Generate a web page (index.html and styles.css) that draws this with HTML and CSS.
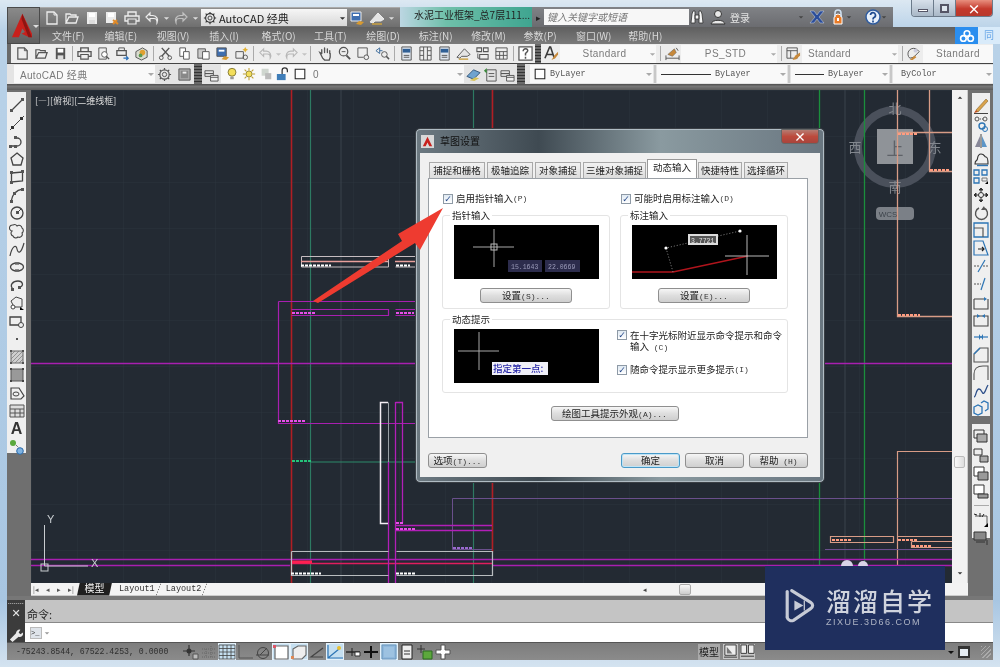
FILE: index.html
```html
<!DOCTYPE html>
<html lang="zh">
<head>
<meta charset="utf-8">
<title>AutoCAD 草图设置</title>
<link rel="stylesheet" href="styles.css">
</head>
<body>
<svg class="defs" width="0" height="0" aria-hidden="true">
<defs>
<symbol id="new" viewBox="0 0 16 16"><path d="M3 2h7l3 3v9H3z" fill="none" stroke="currentColor" stroke-width="1.3"/><path d="M10 2v3h3" fill="none" stroke="currentColor"/></symbol>
<symbol id="open" viewBox="0 0 16 16"><path d="M2 13V4h4l1 1h5v2H5l-3 6h10l2-6H12" fill="none" stroke="currentColor" stroke-width="1.3"/></symbol>
<symbol id="save" viewBox="0 0 16 16"><path d="M3 2h10v12H3z" fill="currentColor"/><path d="M5 3h6v4H5z" fill="#fff"/><path d="M5 10h6v4H5z" fill="#ddd"/></symbol>
<symbol id="saveas" viewBox="0 0 16 16"><path d="M2 2h10v11H2z" fill="currentColor"/><path d="M4 3h6v4H4z" fill="#fff"/><path d="M9 10l5 4M9 14l4-4" stroke="#e08a28" stroke-width="2"/></symbol>
<symbol id="plot" viewBox="0 0 16 16"><path d="M4 6V2h8v4M4 11H1V6h14v5h-3" fill="none" stroke="currentColor" stroke-width="1.4"/><path d="M4 9h8v5H4z" fill="none" stroke="currentColor" stroke-width="1.2"/></symbol>
<symbol id="preview" viewBox="0 0 16 16"><path d="M3 2h8v12H3z" fill="none" stroke="currentColor"/><circle cx="9" cy="9" r="3" fill="#fff" stroke="currentColor"/><path d="M11 11l3 3" stroke="currentColor" stroke-width="1.5"/></symbol>
<symbol id="publish" viewBox="0 0 16 16"><path d="M2 10V5h10v5z" fill="none" stroke="currentColor" stroke-width="1.4"/><path d="M4 5V2h6v3" fill="none" stroke="currentColor"/><path d="M9 13h5M12 11l2 2-2 2" stroke="#2c70b8" fill="none" stroke-width="1.4"/></symbol>
<symbol id="sheet" viewBox="0 0 16 16"><path d="M2 6l7-4 5 3v7l-6 3-6-3z" fill="#d8dcd0" stroke="currentColor"/><circle cx="9" cy="7" r="3" fill="#e0a030"/><circle cx="7" cy="10" r="2" fill="#5a9a50"/></symbol>
<symbol id="cut" viewBox="0 0 16 16"><path d="M4 2l8 9M12 2l-8 9" stroke="currentColor" stroke-width="1.5"/><circle cx="3.5" cy="12.5" r="2" fill="none" stroke="currentColor"/><circle cx="12.5" cy="12.5" r="2" fill="none" stroke="currentColor"/></symbol>
<symbol id="copy" viewBox="0 0 16 16"><path d="M3 2h6v9H3z" fill="#fff" stroke="currentColor"/><path d="M7 6h6v8H7z" fill="#fff" stroke="currentColor"/></symbol>
<symbol id="paste" viewBox="0 0 16 16"><path d="M2 3h8v10H2z" fill="#ccc" stroke="currentColor"/><path d="M7 6h7v8H7z" fill="#fff" stroke="currentColor"/></symbol>
<symbol id="match" viewBox="0 0 16 16"><path d="M2 2h10v9H2z" fill="#3f6fb0" stroke="currentColor"/><path d="M4 4h6v2H4z" fill="#fff"/><path d="M7 14l3-3 5 1-3 3z" fill="#d89a30"/></symbol>
<symbol id="block" viewBox="0 0 16 16"><path d="M2 6h8v7H2z" fill="none" stroke="currentColor"/><path d="M12 1l1 2 2 1-2 1-1 2-1-2-2-1 2-1z" fill="#e2b030"/><circle cx="12" cy="12" r="2.4" fill="none" stroke="currentColor"/></symbol>
<symbol id="undo" viewBox="0 0 16 16"><path d="M6 3L2 7l4 4V8.500h4a3 3 0 0 1 3 3V13a5 5 0 0 0-4-7.500H6z" fill="none" stroke="currentColor" stroke-width="1.2"/></symbol>
<symbol id="redo" viewBox="0 0 16 16"><path d="M10 3l4 4-4 4V8.500H6a3 3 0 0 0-3 3V13a5 5 0 0 1 4-7.500h3z" fill="none" stroke="currentColor" stroke-width="1.2"/></symbol>
<symbol id="drop" viewBox="0 0 8 16"><path d="M1 7h6l-3 3z" fill="currentColor"/></symbol>
<symbol id="pan" viewBox="0 0 16 16"><path d="M4 8V4M7 7V2M10 7V3M12.500 8V5M4 8L2 7l3 6 2 2h5l1-3V8" fill="none" stroke="currentColor" stroke-width="1.4" stroke-linecap="round"/></symbol>
<symbol id="zoom" viewBox="0 0 16 16"><circle cx="7" cy="6" r="4.500" fill="none" stroke="currentColor" stroke-width="1.3"/><path d="M10 10l4 4" stroke="currentColor" stroke-width="2"/><path d="M5 6h4" stroke="currentColor"/></symbol>
<symbol id="zoomw" viewBox="0 0 16 16"><path d="M2 2h10v8" fill="none" stroke="currentColor"/><path d="M2 2v10h6" fill="none" stroke="currentColor"/><circle cx="11" cy="12" r="2.500" fill="none" stroke="currentColor"/></symbol>
<symbol id="zoomp" viewBox="0 0 16 16"><path d="M1 5l4-3v6zM5 5h3" fill="none" stroke="#3b6a9a"/><circle cx="10" cy="9" r="3" fill="none" stroke="currentColor"/><path d="M12 11l3 3" stroke="currentColor" stroke-width="1.600"/></symbol>
<symbol id="prop" viewBox="0 0 16 16"><path d="M3 1h10v14H3z" fill="#dfe6ee" stroke="currentColor"/><path d="M4 3h8v4H4z" fill="#2f5f95"/><path d="M5 10h6M5 12h6" stroke="currentColor"/></symbol>
<symbol id="palette" viewBox="0 0 16 16"><path d="M2 1h12v14H2zM6 1v14M10 1v14" fill="none" stroke="currentColor"/><path d="M2 5h4M10 5h4M2 10h4M10 10h4" stroke="currentColor"/></symbol>
<symbol id="tool" viewBox="0 0 16 16"><path d="M1 12l8-9 6 6-3 2H6l-2 2z" fill="#e4e4e4" stroke="currentColor"/><path d="M3 14h10" stroke="#caa040" stroke-width="1.500"/></symbol>
<symbol id="sheetset" viewBox="0 0 16 16"><path d="M2 2h5v4H2zM9 2h5v4H9zM5 9h9v5H5z" fill="none" stroke="currentColor" stroke-width="1.100"/><path d="M3 8v5h2" fill="none" stroke="currentColor"/></symbol>
<symbol id="help" viewBox="0 0 16 16"><path d="M1 1h14v14H1z" fill="#fff" stroke="currentColor" stroke-width="1.300"/><path d="M5.500 5.500A2.500 2.500 0 0 1 8 3c2 0 3 1.500 2 3L8 8v2M8 11.500v2" fill="none" stroke="currentColor" stroke-width="1.600"/></symbol>
<symbol id="tstyle" viewBox="0 0 16 16"><path d="M1 13L6 1h1l4 12M3 9h6" fill="none" stroke="#3a3a3a" stroke-width="1.700"/><path d="M8 15l3-5 4-4v3l-3 4z" fill="#c7893b"/></symbol>
<symbol id="dstyle" viewBox="0 0 16 16"><path d="M1 13h14M1 10v5M15 10v5" fill="none" stroke="currentColor"/><path d="M3 9l7-6 2 4-4 4z" fill="#c7893b" stroke="currentColor" stroke-width=".5"/><path d="M12 2l2 3" stroke="currentColor"/></symbol>
<symbol id="tbl" viewBox="0 0 16 16"><path d="M2 2h12v12H2zM2 6h12M2 10h12M6 6v8M10 6v8" fill="none" stroke="currentColor"/></symbol>
<symbol id="tblstyle" viewBox="0 0 16 16"><path d="M1 2h11v11H1zM1 5h11M5 5v8" fill="#eee" stroke="currentColor"/><path d="M7 15l3-5 5-3v3l-4 4z" fill="#c7893b"/></symbol>
<symbol id="mlstyle" viewBox="0 0 16 16"><path d="M3 13a6 6 0 0 1 8-9l2 2-6 6z" fill="none" stroke="currentColor"/><circle cx="9" cy="5" r="2" fill="#ccd"/><path d="M3 15l5-5 2 2-4 3z" fill="#c7893b"/></symbol>
<symbol id="gear" viewBox="0 0 16 16"><circle cx="8" cy="8" r="5" fill="none" stroke="currentColor" stroke-width="1.300"/><circle cx="8" cy="8" r="2.300" fill="none" stroke="currentColor"/><path d="M8 1v2M8 13v2M1 8h2M13 8h2M3 3l1.500 1.500M11.500 11.500L13 13M13 3l-1.500 1.500M4.500 11.500L3 13" stroke="currentColor" stroke-width="1.300"/></symbol>
<symbol id="layers" viewBox="0 0 16 16"><path d="M1 4h9v3H1zM1 7h9v3H1z" fill="none" stroke="currentColor"/><path d="M7 9h8v6H7z" fill="#eee" stroke="currentColor"/><path d="M7 11h8" stroke="currentColor"/></symbol>
<symbol id="wsave" viewBox="0 0 16 16"><path d="M2 2h12v12H2z" fill="#aaa" stroke="currentColor"/><path d="M4 4h8v8H4z" fill="#888"/><path d="M6 5h4v2H6z" fill="#eee"/></symbol>
<symbol id="bulb" viewBox="0 0 16 16"><circle cx="8" cy="6" r="4.500" fill="#f3de5b" stroke="#7d7230"/><path d="M6 11h4v3H6z" fill="#9a9a9a"/></symbol>
<symbol id="sun" viewBox="0 0 16 16"><circle cx="8" cy="8" r="3.500" fill="#f3de5b" stroke="#8f8030"/><path d="M8 1v3M8 12v3M1 8h3M12 8h3M3 3l2 2M11 11l2 2M13 3l-2 2M5 11l-2 2" stroke="#c0a030" stroke-width="1.200"/></symbol>
<symbol id="lay" viewBox="0 0 16 16"><path d="M3 2h8v8H3z" fill="#cfd6cf"/><path d="M7 7h7v7H7z" fill="#bbb"/></symbol>
<symbol id="lock" viewBox="0 0 16 16"><path d="M1 8h10v7H1z" fill="#3f7db8"/><path d="M7 8V4a3 3 0 0 1 6 0v2" fill="none" stroke="#333" stroke-width="1.400"/></symbol>
<symbol id="sq" viewBox="0 0 16 16"><path d="M2.500 2.500h11v11h-11z" fill="#fff" stroke="#222" stroke-width="1.200"/></symbol>
<symbol id="layst" viewBox="0 0 16 16"><path d="M1 10l7-7 7 3-7 7z" fill="#6fa3cf" stroke="#35577a"/><path d="M4 14l6-3 4 1-5 3z" fill="#d8c35a"/></symbol>
<symbol id="layprev" viewBox="0 0 16 16"><path d="M4 3h10v12H4z" fill="none" stroke="currentColor"/><path d="M1 4l3-3v6z" fill="#3a8a3a"/><path d="M6 7h6M6 10h6" stroke="currentColor"/></symbol>
<symbol id="binoc" viewBox="0 0 16 16"><path d="M2 14l1-9 1-3h2v12zM14 14l-1-9-1-3h-2v12zM6 6h4v4H6z" fill="#f5f5f5" stroke="#333" stroke-width=".8"/></symbol>
<symbol id="user" viewBox="0 0 16 16"><circle cx="8" cy="5" r="3.500" fill="#e8e8e8" stroke="#333"/><path d="M1 15c1-5 13-5 14 0z" fill="#e8e8e8" stroke="#333"/></symbol>
<symbol id="xapp" viewBox="0 0 16 16"><path d="M1 2h4l3 4 3-4h4l-5 6 5 6h-4l-3-4-3 4H1l5-6z" fill="#2b4d9a" stroke="#c8d4ea" stroke-width=".5"/></symbol>
<symbol id="key" viewBox="0 0 16 16"><path d="M4 9a4 4 0 0 1 8 0v6H4z" fill="#e87b28" stroke="#fff"/><path d="M5 8V4a3 3 0 0 1 6 0v4" fill="none" stroke="#cfe0f0" stroke-width="1.600"/><path d="M8 9v3" stroke="#fff" stroke-width="2"/></symbol>
<symbol id="qhelp" viewBox="0 0 16 16"><circle cx="8" cy="8" r="7" fill="#e8f0fa" stroke="#2f5c9f" stroke-width="1.500"/><path d="M5.500 6A2.500 2.500 0 1 1 9 8.500c-.8.500-1 1-1 2" fill="none" stroke="#1e4a90" stroke-width="1.700"/><path d="M8 11.500v2" stroke="#1e4a90" stroke-width="1.700"/></symbol>
<symbol id="cloud" viewBox="0 0 20 16"><circle cx="10" cy="5" r="3.500" fill="none" stroke="#fff" stroke-width="2"/><circle cx="5.500" cy="11" r="3.500" fill="none" stroke="#fff" stroke-width="2"/><circle cx="14.500" cy="11" r="3.500" fill="none" stroke="#fff" stroke-width="2"/></symbol>

<symbol id="d-line" viewBox="0 0 16 16"><path d="M2.500 13.500l11-11" stroke="currentColor" stroke-width="1.200"/><path d="M1 12h3v3H1zM12 1h3v3h-3z" fill="#555"/></symbol>
<symbol id="d-xline" viewBox="0 0 16 16"><path d="M1 15L15 1" stroke="currentColor"/><path d="M2 11h3v3H2zM11 2h3v3h-3z" fill="#333"/></symbol>
<symbol id="d-pline" viewBox="0 0 16 16"><path d="M1 13h7a4 4 0 0 0 0-8H6" fill="none" stroke="currentColor" stroke-width="1.300"/><path d="M0 12h3v3H0zM5 12h3v3H5zM5 3h3v3H5z" fill="#555"/></symbol>
<symbol id="d-poly" viewBox="0 0 16 16"><path d="M8 2l6 5-2 7H4L2 7z" fill="none" stroke="currentColor" stroke-width="1.300"/></symbol>
<symbol id="d-rect" viewBox="0 0 16 16"><path d="M2.500 4l11-1v9l-11 1z" fill="none" stroke="currentColor" stroke-width="1.300"/><path d="M1 2h3v3H1zM12 1h3v3h-3zM1 12h3v3H1z" fill="#555"/></symbol>
<symbol id="d-arc" viewBox="0 0 16 16"><path d="M2 15C3 7 7 3 14 2" fill="none" stroke="currentColor" stroke-width="1.300"/><path d="M1 13h3v3H1zM12 1h3v3h-3zM4 5h3v3H4z" fill="#555"/></symbol>
<symbol id="d-circ" viewBox="0 0 16 16"><circle cx="8" cy="8" r="6" fill="none" stroke="currentColor" stroke-width="1.300"/><path d="M7 6h3v3H7z" fill="#555"/><path d="M8 8l4-4" stroke="currentColor"/></symbol>
<symbol id="d-rev" viewBox="0 0 16 16"><path d="M4 2a3 3 0 0 1 4 1 3 3 0 0 1 5 2 3 3 0 0 1 0 5 3 3 0 0 1-4 4 3 3 0 0 1-5-1 3 3 0 0 1-1-5 3 3 0 0 1 1-6z" fill="none" stroke="currentColor" stroke-width="1.100"/></symbol>
<symbol id="d-spl" viewBox="0 0 16 16"><path d="M1 15C3 5 7 3 8 8s4 5 7-6" fill="none" stroke="currentColor" stroke-width="1.200"/></symbol>
<symbol id="d-ell" viewBox="0 0 16 16"><ellipse cx="8" cy="8" rx="6.500" ry="4" fill="none" stroke="currentColor" stroke-width="1.300"/><path d="M6 3h4v3H6zM6 10h4v3H6z" fill="#666" opacity=".7"/></symbol>
<symbol id="d-ellarc" viewBox="0 0 16 16"><path d="M4 12C0 8 4 4 9 4s6 5 2 6" fill="none" stroke="currentColor" stroke-width="1.300"/><path d="M2 11h3v3H2zM9 9h3v3H9z" fill="#555"/></symbol>
<symbol id="d-ins" viewBox="0 0 16 16"><path d="M2 6l5-4 6 2v8H5z" fill="none" stroke="currentColor"/><circle cx="4" cy="12" r="2" fill="#fff" stroke="currentColor"/><path d="M11 12l4 3-4 0z" fill="#000"/></symbol>
<symbol id="d-blk" viewBox="0 0 16 16"><path d="M1 4h11v8H1z" fill="none" stroke="currentColor" stroke-width="1.300"/><circle cx="12" cy="12" r="2.500" fill="#eee" stroke="currentColor"/></symbol>
<symbol id="d-pt" viewBox="0 0 16 16"><path d="M7 7h2v2H7z" fill="#555"/></symbol>
<symbol id="d-hat" viewBox="0 0 16 16"><path d="M2 2h12v12H2z" fill="#cfcfcf" stroke="#666"/><path d="M2 6l4-4M2 10l8-8M2 14L14 2M6 14l8-8M10 14l4-4" stroke="#777" stroke-width=".7"/><path d="M1 1h2v2H1zM13 1h2v2h-2zM1 13h2v2H1zM13 13h2v2h-2z" fill="#555"/></symbol>
<symbol id="d-grd" viewBox="0 0 16 16"><path d="M2 2h12v12H2z" fill="#999" stroke="#555"/><path d="M1 1h2v2H1zM13 1h2v2h-2zM1 13h2v2H1zM13 13h2v2h-2z" fill="#444"/></symbol>
<symbol id="d-reg" viewBox="0 0 16 16"><path d="M2 3h8l5 8-3 3H2z" fill="none" stroke="currentColor" stroke-width="1.200"/><ellipse cx="7" cy="9" rx="3" ry="2" fill="none" stroke="currentColor"/></symbol>
<symbol id="d-tbl" viewBox="0 0 16 16"><path d="M1 2h14v12H1z" fill="#ddd" stroke="#555"/><path d="M1 6h14M1 10h14M6 6v8M11 6v8" stroke="#555"/></symbol>
<symbol id="d-add" viewBox="0 0 16 16"><circle cx="4" cy="4" r="3" fill="#5aa83c"/><path d="M7 6l3 3" stroke="#444" stroke-dasharray="1 1"/><circle cx="11" cy="12" r="3.300" fill="#7fb2e0" stroke="#2a6aaa"/></symbol>

<symbol id="m-erase" viewBox="0 0 16 16"><path d="M3 12L13 1l2 2L5 14z" fill="#d9a24a" stroke="#8a6a30" stroke-width=".6"/><path d="M1 15l2-3 2 2z" fill="#c05020"/><path d="M1 15.500h14" stroke="#444"/></symbol>
<symbol id="m-copy" viewBox="0 0 16 16"><circle cx="4" cy="3" r="2" fill="none" stroke="#555"/><path d="M7 3h4" stroke="#555" stroke-dasharray="1 1"/><circle cx="12" cy="3" r="2" fill="none" stroke="#555"/><circle cx="9" cy="10" r="3" fill="none" stroke="#2d75b5" stroke-width="1.400"/><circle cx="12" cy="13" r="2.500" fill="none" stroke="#2d75b5"/></symbol>
<symbol id="m-mirror" viewBox="0 0 16 16"><path d="M8 1v14" stroke="#444"/><path d="M7 3v11H2z" fill="#889"/><path d="M9 3v11h5z" fill="#5d96c8"/></symbol>
<symbol id="m-offset" viewBox="0 0 16 16"><path d="M2 13c0-3 1-3 2-4s0-6 4-6 3 3 5 3 2 3 2 7z" fill="none" stroke="#333" stroke-width="1.100"/><path d="M4 14.500h11" stroke="#2d75b5" stroke-width="1.400"/></symbol>
<symbol id="m-array" viewBox="0 0 16 16"><path d="M1 1h5v5H1zM9 1h5v5H9zM1 9h5v5H1z" fill="none" stroke="#2d75b5" stroke-width="1.300"/><path d="M9 9h5v3H9z" fill="none" stroke="#777"/><path d="M12 15l3-3v3z" fill="#000"/></symbol>
<symbol id="m-move" viewBox="0 0 16 16"><path d="M8 1v14M1 8h14M8 1L6 3h4zM8 15l-2-2h4zM1 8l2-2v4zM15 8l-2-2v4z" fill="#333" stroke="#333"/><circle cx="8" cy="8" r="2.500" fill="#eee" stroke="#333"/></symbol>
<symbol id="m-rotate" viewBox="0 0 16 16"><path d="M6 3a6 6 0 1 0 5 0" fill="none" stroke="#555" stroke-width="1.400"/><path d="M11 1l1 4-4 0z" fill="#555"/></symbol>
<symbol id="m-scale" viewBox="0 0 16 16"><path d="M1 1h14v14H1z" fill="none" stroke="#2d75b5" stroke-width="1.300"/><path d="M1 6h9v9" fill="none" stroke="#555" stroke-width="1.200"/></symbol>
<symbol id="m-stretch" viewBox="0 0 16 16"><path d="M1 1h9l5 14H1z" fill="none" stroke="#2d75b5" stroke-width="1.200"/><path d="M5 9h6M9 7l2 2-2 2" fill="none" stroke="#222" stroke-width="1.200"/></symbol>
<symbol id="m-trim" viewBox="0 0 16 16"><path d="M12 2L5 14" stroke="#2d75b5" stroke-width="1.200"/><path d="M1 8h5M10 8h5" stroke="#555" stroke-dasharray="2 1"/></symbol>
<symbol id="m-ext" viewBox="0 0 16 16"><path d="M12 2L8 14" stroke="#2d75b5" stroke-width="1.200"/><path d="M1 8h7" stroke="#555" stroke-dasharray="2 1"/></symbol>
<symbol id="m-brk" viewBox="0 0 16 16"><path d="M1 5h10M1 5v10h14V5" fill="none" stroke="#444" stroke-width="1.100"/><path d="M11 3l3 2-3 2z" fill="#2d75b5"/></symbol>
<symbol id="m-brk2" viewBox="0 0 16 16"><path d="M1 5h14v10H1z" fill="none" stroke="#444" stroke-width="1.100"/><path d="M4 3l3 2-3 2zM12 3L9 5l3 2z" fill="#2d75b5"/></symbol>
<symbol id="m-join" viewBox="0 0 16 16"><path d="M1 8h14" stroke="#2d75b5" stroke-width="1.200"/><path d="M6 5l2 3-2 3zM10 5L8 8l2 3z" fill="#2d75b5"/></symbol>
<symbol id="m-cham" viewBox="0 0 16 16"><path d="M1 15V7l6-6h8v14z" fill="none" stroke="#555" stroke-width="1.100"/><path d="M1 7l6-6" stroke="#2d75b5" stroke-width="1.300"/></symbol>
<symbol id="m-fil" viewBox="0 0 16 16"><path d="M1 15V9C1 4 4 1 10 1h5v14" fill="none" stroke="#555" stroke-width="1.100"/></symbol>
<symbol id="m-bln" viewBox="0 0 16 16"><path d="M1 14c2 0 2-8 5-8s3 6 5 4 2-5 4-8" fill="none" stroke="#2d4f8a" stroke-width="1.300"/></symbol>
<symbol id="m-exp" viewBox="0 0 16 16"><path d="M1 7l4-2 4 2v6l-4 2-4-2zM8 3l3-2 4 2v6l-3 2" fill="none" stroke="#2d75b5" stroke-width="1.300"/></symbol>
<symbol id="o-1" viewBox="0 0 16 16"><path d="M1 1h10v8H1z" fill="#eee" stroke="#333"/><path d="M4 5h10v8H4z" fill="#aaa" stroke="#333"/></symbol>
<symbol id="o-2" viewBox="0 0 16 16"><path d="M1 1h8v6H1z" fill="#eee" stroke="#333"/><path d="M7 8h8v6H7z" fill="#aaa" stroke="#333"/></symbol>
<symbol id="o-3" viewBox="0 0 16 16"><path d="M1 1h10v9H1z" fill="#fff" stroke="#333"/><path d="M5 6h10v8H5z" fill="#999" stroke="#333"/></symbol>
<symbol id="o-4" viewBox="0 0 16 16"><path d="M1 1h10v9H1z" fill="#fff" stroke="#333"/><path d="M5 10h10v4H5z" fill="#999" stroke="#333"/></symbol>
<symbol id="o-5" viewBox="0 0 16 16"><path d="M2 4h12v10" fill="none" stroke="#555"/><path d="M1 2l3 1M7 1v4M11 2l-2 3" stroke="#222"/><path d="M11 15l4-4v4z" fill="#000"/></symbol>
<symbol id="o-6" viewBox="0 0 16 16"><path d="M1 2h12v8H1z" fill="#888" stroke="#333"/><path d="M3 12h9M14 10v5" stroke="#333"/></symbol>

<symbol id="s-infer" viewBox="0 0 18 16"><path d="M7 1v11M1 7h12" stroke="#333" stroke-width="1.200"/><circle cx="7" cy="7" r="2.500" fill="#333"/><path d="M11 10h5v5h-5z" fill="#bbb" stroke="#555"/></symbol>
<symbol id="s-snap" viewBox="0 0 18 16"><path d="M2 13h14M11 2v11M6 5v8M2 9h14M2 5h14" stroke="#666" stroke-dasharray="1 1"/></symbol>
<symbol id="s-grid" viewBox="0 0 18 16"><path d="M1 1h16v14H1zM1 4.500h16M1 8h16M1 11.500h16M5 1v14M9 1v14M13 1v14" fill="none" stroke="#444" stroke-width=".8"/></symbol>
<symbol id="s-ortho" viewBox="0 0 18 16"><path d="M3 1v13h14" fill="none" stroke="#555"/></symbol>
<symbol id="s-polar" viewBox="0 0 18 16"><circle cx="9" cy="9" r="5.500" fill="none" stroke="#444"/><path d="M2 11h13M6 11l7-7" stroke="#444"/></symbol>
<symbol id="s-box" viewBox="0 0 18 16"><path d="M3 2h13v13H3z" fill="#fff" stroke="#666" stroke-width="1.200"/><path d="M1 1h3v3H1z" fill="#d56"/></symbol>
<symbol id="s-box3" viewBox="0 0 18 16"><path d="M3 5l5-3h8v9l-4 4H3z" fill="#eee" stroke="#666" stroke-width="1.100"/><path d="M1 12h3v3H1z" fill="#d85"/></symbol>
<symbol id="s-angle" viewBox="0 0 18 16"><path d="M15 4L3 13h12" fill="none" stroke="#444" stroke-width="1.200"/></symbol>
<symbol id="s-ucs" viewBox="0 0 18 16"><path d="M2 1v13h15M2 14l11-9" fill="none" stroke="#2d75b5" stroke-width="1.200"/><circle cx="13" cy="4" r="2" fill="#e8c030"/></symbol>
<symbol id="s-dyn" viewBox="0 0 18 16"><path d="M2 8h14" stroke="#222" stroke-width="1.400"/><path d="M8 4v8" stroke="#222"/><path d="M11 8h5v4h-5z" fill="#fff" stroke="#333"/></symbol>
<symbol id="s-cross" viewBox="0 0 18 16"><path d="M9 2v12M2 8h14" stroke="#111" stroke-width="2"/></symbol>
<symbol id="s-trans" viewBox="0 0 18 16"><path d="M2 1h14v14H2z" fill="#8fb8dc" stroke="#6a95bb"/><path d="M4 3h10v10H4z" fill="#a7c8e4" opacity=".6"/></symbol>
<symbol id="s-qp" viewBox="0 0 18 16"><path d="M4 1h10v14H4z" fill="#eee" stroke="#222"/><path d="M6 7h6M6 10h6" stroke="#333"/></symbol>
<symbol id="s-sc" viewBox="0 0 18 16"><path d="M5 1v8M1 5h8" stroke="#333"/><path d="M7 7h9v8H7z" fill="#5ca83c" stroke="#2a6a20"/></symbol>
<symbol id="s-am" viewBox="0 0 18 16"><path d="M7 1h4v5h5v4h-5v5H7v-5H2V6h5z" fill="#fff" stroke="#555"/></symbol>
<symbol id="s-model" viewBox="0 0 16 16"><path d="M2 1h12v11H2z" fill="#eee" stroke="#333"/><path d="M4 3v7h6z" fill="#777"/><path d="M1 14h14" stroke="#333"/></symbol>
<symbol id="s-layout" viewBox="0 0 16 16"><path d="M1 1h6v9H1zM9 1h6v9H9z" fill="#eee" stroke="#333"/><path d="M1 13h14" stroke="#333"/></symbol>
</defs>
</svg>

<div class="window">
  <header class="head">
    <div class="app-btn">
      <svg class="app-logo" viewBox="0 0 24 30"><path d="M13 1L1 28h8l4-10 3 4-4 2 9 4h5z" fill="#c8201c"/><path d="M13 1l11 27h-4L12 7z" fill="#8e1412"/></svg>
      <svg class="ic ic-drop"><use href="#drop"/></svg>
    </div>
    <div class="row-title">
      <div class="qat">
        <svg class="ic"><use href="#new"/></svg><svg class="ic"><use href="#open"/></svg><svg class="ic"><use href="#save"/></svg><svg class="ic"><use href="#saveas"/></svg><svg class="ic"><use href="#plot"/></svg><svg class="ic"><use href="#undo"/></svg><svg class="ic-d"><use href="#drop"/></svg><svg class="ic ic-dim"><use href="#redo"/></svg><svg class="ic-d"><use href="#drop"/></svg>
        <div class="ws-combo"><svg class="ic"><use href="#gear"/></svg><span class="ws-text">AutoCAD 经典</span><svg class="ic-d"><use href="#drop"/></svg></div>
        <svg class="ic"><use href="#match"/></svg><svg class="ic"><use href="#tool"/></svg><svg class="ic-d"><use href="#drop"/></svg>
      </div>
      <div class="doc-title">水泥工业框架_总7层111...</div>
      <div class="search">
        <span class="search-tab">▸</span>
        <div class="search-box">键入关键字或短语</div>
        <svg class="ic"><use href="#binoc"/></svg>
        <svg class="ic ic-user"><use href="#user"/></svg>
        <span class="login">登录</span>
        <svg class="ic-d ic-login"><use href="#drop"/></svg>
        <svg class="ic ic-x"><use href="#xapp"/></svg>
        <svg class="ic ic-x"><use href="#key"/></svg>
        <svg class="ic-d"><use href="#drop"/></svg>
        <svg class="ic ic-help"><use href="#qhelp"/></svg>
        <svg class="ic-d"><use href="#drop"/></svg>
      </div>
      <div class="win-ctl">
        <span class="wc wc-min"><i class="wc-min-bar"></i></span>
        <span class="wc wc-max"><i class="wc-max-box"></i></span>
        <span class="wc wc-close">×</span>
      </div>
    </div>
    <div class="row-menu">
      <nav class="menu">
        <span>文件(F)</span><span>编辑(E)</span><span>视图(V)</span><span>插入(I)</span><span>格式(O)</span><span>工具(T)</span><span>绘图(D)</span><span>标注(N)</span><span>修改(M)</span><span>参数(P)</span><span>窗口(W)</span><span>帮助(H)</span>
      </nav>
      <div class="baidu"><span class="baidu-ic"><svg class="cloud"><use href="#cloud"/></svg></span><span class="baidu-rest">同</span></div>
    </div>
  </header>

  <div class="tb tb1">
    <span class="grip"></span>
    <svg class="ic"><use href="#new"/></svg><svg class="ic"><use href="#open"/></svg><svg class="ic"><use href="#save"/></svg>
    <i class="sep"></i>
    <svg class="ic"><use href="#plot"/></svg><svg class="ic"><use href="#preview"/></svg><svg class="ic"><use href="#publish"/></svg><svg class="ic"><use href="#sheet"/></svg>
    <i class="sep"></i>
    <svg class="ic"><use href="#cut"/></svg><svg class="ic"><use href="#copy"/></svg><svg class="ic"><use href="#paste"/></svg><svg class="ic"><use href="#match"/></svg><svg class="ic"><use href="#block"/></svg>
    <i class="sep"></i>
    <svg class="ic ic-faint"><use href="#undo"/></svg><svg class="ic-d ic-faint"><use href="#drop"/></svg><svg class="ic ic-faint"><use href="#redo"/></svg><svg class="ic-d ic-faint"><use href="#drop"/></svg>
    <i class="sep sep-w"></i>
    <svg class="ic"><use href="#pan"/></svg><svg class="ic"><use href="#zoom"/></svg><svg class="ic"><use href="#zoomw"/></svg><svg class="ic"><use href="#zoomp"/></svg>
    <i class="sep"></i>
    <svg class="ic"><use href="#prop"/></svg><svg class="ic"><use href="#palette"/></svg><svg class="ic"><use href="#prop"/></svg><svg class="ic"><use href="#tool"/></svg><svg class="ic"><use href="#sheetset"/></svg><svg class="ic"><use href="#tbl"/></svg>
    <i class="sep"></i>
    <svg class="ic"><use href="#help"/></svg>
    <span class="grip grip-dark"></span>
    <svg class="ic"><use href="#tstyle"/></svg>
    <div class="combo c-std1"><span class="combo-mid">Standard</span><svg class="ic-d"><use href="#drop"/></svg></div>
    <i class="sep"></i>
    <svg class="ic"><use href="#dstyle"/></svg>
    <div class="combo c-std1"><span class="combo-mid">PS_STD</span><svg class="ic-d"><use href="#drop"/></svg></div>
    <i class="sep"></i>
    <svg class="ic"><use href="#tblstyle"/></svg>
    <div class="combo c-std1"><span class="combo-left">Standard</span><svg class="ic-d"><use href="#drop"/></svg></div>
    <i class="sep"></i>
    <svg class="ic"><use href="#mlstyle"/></svg>
    <div class="combo c-std2"><span class="combo-mid">Standard</span></div>
  </div>

  <div class="tb tb2">
    <div class="combo c-ws"><span class="combo-left">AutoCAD 经典</span><svg class="ic-d"><use href="#drop"/></svg></div>
    <svg class="ic"><use href="#gear"/></svg><svg class="ic ic-ml"><use href="#wsave"/></svg>
    <span class="grip grip-dark"></span>
    <svg class="ic"><use href="#layers"/></svg>
    <div class="combo c-layer">
      <svg class="ic-s"><use href="#bulb"/></svg><svg class="ic-s"><use href="#sun"/></svg><svg class="ic-s"><use href="#lay"/></svg><svg class="ic-s"><use href="#lock"/></svg><svg class="ic-s"><use href="#sq"/></svg>
      <span class="layer-name">0</span><svg class="ic-d"><use href="#drop"/></svg>
    </div>
    <svg class="ic"><use href="#layst"/></svg><svg class="ic"><use href="#layprev"/></svg><svg class="ic"><use href="#layers"/></svg>
    <span class="grip grip-dark"></span>
    <div class="combo c-color"><svg class="ic-s"><use href="#sq"/></svg><span class="mono">ByLayer</span><svg class="ic-d"><use href="#drop"/></svg></div>
    <i class="gap-sep"></i>
    <div class="combo c-ltype"><i class="ln ln-l"></i><span class="mono">ByLayer</span><svg class="ic-d"><use href="#drop"/></svg></div>
    <i class="gap-sep"></i>
    <div class="combo c-lw"><i class="ln ln-m"></i><span class="mono">ByLayer</span><svg class="ic-d"><use href="#drop"/></svg></div>
    <i class="gap-sep"></i>
    <div class="combo c-plot"><span class="mono mono-pl">ByColor</span><svg class="ic-d"><use href="#drop"/></svg></div>
  </div>
  <div class="tb-gap"></div>

  <main class="main">
    <aside class="side side-l">
      <div class="vbar vbar-l">
        <span class="vgrip"></span>
        <svg class="vi"><use href="#d-line"/></svg><svg class="vi"><use href="#d-xline"/></svg><svg class="vi"><use href="#d-pline"/></svg><svg class="vi"><use href="#d-poly"/></svg><svg class="vi"><use href="#d-rect"/></svg><svg class="vi"><use href="#d-arc"/></svg><svg class="vi"><use href="#d-circ"/></svg><svg class="vi"><use href="#d-rev"/></svg><svg class="vi"><use href="#d-spl"/></svg><svg class="vi"><use href="#d-ell"/></svg><svg class="vi"><use href="#d-ellarc"/></svg><svg class="vi"><use href="#d-ins"/></svg><svg class="vi"><use href="#d-blk"/></svg><svg class="vi"><use href="#d-pt"/></svg><svg class="vi"><use href="#d-hat"/></svg><svg class="vi"><use href="#d-grd"/></svg><svg class="vi"><use href="#d-reg"/></svg><svg class="vi"><use href="#d-tbl"/></svg><span class="vi vi-a">A</span><svg class="vi"><use href="#d-add"/></svg>
      </div>
    </aside>
    <div class="center">
      <div class="canvas-row">
        <svg class="canvas" viewBox="31 90 921 493">
          <defs>
            <pattern id="grid" x="31" y="90" width="46" height="46" patternUnits="userSpaceOnUse"><path d="M46 0H0V46" fill="none" stroke="#2c333d" stroke-width="1"/></pattern>
          </defs>
          <rect x="31" y="90" width="921" height="493" fill="#232a33"/>
          <rect x="31" y="90" width="921" height="493" fill="url(#grid)"/>
          <g class="cube">
            <circle cx="895" cy="147" r="37" fill="none" stroke="#4a505b" stroke-width="8"/>
            <rect x="877" y="129" width="36" height="35" fill="#8f9398"/>
            <text x="895" y="155" class="cube-main">上</text>
            <text x="895" y="113" class="cube-t">北</text>
            <text x="895" y="192" class="cube-t">南</text>
            <text x="855" y="152" class="cube-t">西</text>
            <text x="935" y="152" class="cube-t">东</text>
            <rect x="876" y="207" width="38" height="13" rx="4" fill="#7b8087"/>
            <text x="888" y="217" class="cube-w">WCS</text>
          </g>
          <g fill="none" stroke-width="1">
            <path d="M341 90V583M845 90V583" stroke="#3a424d"/>
            <path d="M310.500 90V583M473.500 90V130M473.500 480V583" stroke="#2d7a62" stroke-width="1.200"/>
            <path d="M819.500 90V128M819.500 482V566M864.500 90V566" stroke="#1b8f3c" stroke-width="1.300"/>
            <path d="M291.500 90V583M492.500 90V130M492.500 480V552" stroke="#b01e24" stroke-width="1.600"/>
            <path d="M897.500 90V316.500H952M929.500 90V171.500H952M897.500 132.500H952" stroke="#d89c86" stroke-width="1.300"/>
            <path d="M897.500 566V451.500H952M830.500 536.500h63v6h-63zM897.500 536.500H952M911.500 541.500V547.500H952M911.500 541.500H952" stroke="#d89c86" stroke-width="1.200"/>
            <path d="M825 498.500H952M825 549.500H952M452.500 549.500V498.500H825M452.500 549.500H492" stroke="#6a4f8c"/>
            <path d="M31 363.500H415M825 363.500H952M31 559.500H952M31 565.500H290M492 565.500H952" stroke="#a81fb0" stroke-width="1.500"/>
            <path d="M278.500 301.500H415M278.500 301.500V423.500H415M291.500 309.500H388.500V315.500H291.500M395.500 309.500H415M395.500 315.500H415" stroke="#a81fb0" stroke-width="1.200"/>
            <path d="M291 563.500H492" stroke="#e01d5f" stroke-width="1.500"/>
            <path d="M310 462H415" stroke="#2d8a6a"/>
            <path d="M388.500 462V583M395.500 402V583M395.500 402.500H402.500V523M396 525.500H492M396 530.500H492" stroke="#b21fb8" stroke-width="1.300"/>
            <path d="M388.500 402.500V462" stroke="#9aa0a6"/>
            <path d="M388 402.500H380.500V523.500H388" stroke="#f4eef4" stroke-width="1.500"/>
            <path d="M301.500 256.500H388.500V267H301.500V256.500M395.500 256.500H415M395.500 267H415" stroke="#c5bcc0"/>
            <path d="M301 261.500H388M395 261.500H415" stroke="#e8a09c" stroke-width="1.500"/>
            <path d="M301.500 551.500H388.500M291.500 551.500V575.500H388.500M396.500 551.500H492.500V575.500H396.500M291.500 551.500H388" stroke="#b8bcbf" stroke-width="1.200"/>
            <path d="M301 265.500h30M396 265.500h14M291 573.500h30M396 573.500h20" stroke="#fff" stroke-width="2" stroke-dasharray="3 1"/>
            <path d="M292 313h24M396 313h18M278 421h28" stroke="#e64fe8" stroke-width="2" stroke-dasharray="3 1"/>
            <path d="M292 461h20" stroke="#25c47a" stroke-width="2" stroke-dasharray="3 1"/>
            <path d="M396 529h20M396 523h7" stroke="#e64fe8" stroke-width="2" stroke-dasharray="3 1"/>
            <path d="M453 548h20" stroke="#9a6ad0" stroke-width="2" stroke-dasharray="3 1"/>
            <path d="M292 562h20" stroke="#ff2050" stroke-width="3"/>
            <path d="M898 134h20M930 170h20M898 315h22M832 540h20M898 540h20M912 546h20" stroke="#ff9c80" stroke-width="2" stroke-dasharray="3 1"/>
          </g>
          <circle cx="847" cy="566" r="6" fill="#d9d4e8"/><circle cx="863" cy="566" r="5" fill="#d9d4e8"/>
          <g class="ucs">
            <path d="M44.500 525V566H88" fill="none" stroke="#c8ccd0"/>
            <rect x="41" y="564" width="7" height="7" fill="none" stroke="#c8ccd0"/>
            <text x="47" y="523" class="ucs-t">Y</text>
            <text x="91" y="567" class="ucs-t">X</text>
          </g>
          <text x="35" y="104" class="view-label">[—][俯视][二维线框]</text>
        </svg>
        <div class="vscroll"><svg class="ic-d"><use href="#drop"/></svg><span class="vthumb"></span><svg class="ic-d"><use href="#drop"/></svg></div>
      </div>
      <div class="tabs-bar">
        <div class="nav-btns"><span>|◂</span><span>◂</span><span>▸</span><span>▸|</span></div>
        <span class="lt lt-on">模型</span><span class="lt">Layout1</span><span class="lt">Layout2</span>
        <span class="hscroll-arrow">◂</span><span class="hthumb"></span>
      </div>
    </div>
    <aside class="side side-r">
      <div class="vbar vbar-r">
        <span class="vgrip"></span>
        <svg class="vi"><use href="#m-erase"/></svg><svg class="vi"><use href="#m-copy"/></svg><svg class="vi"><use href="#m-mirror"/></svg><svg class="vi"><use href="#m-offset"/></svg><svg class="vi"><use href="#m-array"/></svg><svg class="vi"><use href="#m-move"/></svg><svg class="vi"><use href="#m-rotate"/></svg><svg class="vi"><use href="#m-scale"/></svg><svg class="vi"><use href="#m-stretch"/></svg><svg class="vi"><use href="#m-trim"/></svg><svg class="vi"><use href="#m-ext"/></svg><svg class="vi"><use href="#m-brk"/></svg><svg class="vi"><use href="#m-brk2"/></svg><svg class="vi"><use href="#m-join"/></svg><svg class="vi"><use href="#m-cham"/></svg><svg class="vi"><use href="#m-fil"/></svg><svg class="vi"><use href="#m-bln"/></svg><svg class="vi"><use href="#m-exp"/></svg>
      </div>
      <div class="vbar vbar-o">
        <span class="vgrip"></span>
        <svg class="vi"><use href="#o-1"/></svg><svg class="vi"><use href="#o-2"/></svg><svg class="vi"><use href="#o-3"/></svg><svg class="vi"><use href="#o-4"/></svg><i class="hsep"></i><svg class="vi"><use href="#o-5"/></svg><svg class="vi"><use href="#o-6"/></svg>
      </div>
    </aside>
  </main>

  <section class="cmd">
    <div class="cmd-side"><span class="cmd-grip"></span><span class="cmd-x">✕</span><svg class="wrench" viewBox="0 0 16 16"><path d="M1 13l7-7a4 4 0 0 1 5-4l-2 3 2 2 3-2a4 4 0 0 1-5 5l-7 6z" fill="#e8e8e8"/></svg></div>
    <div class="cmd-body">
      <div class="cmd-hist">命令:</div>
      <div class="cmd-input"><span class="prompt">&gt;_</span><svg class="ic-d"><use href="#drop"/></svg></div>
    </div>
  </section>

  <footer class="status">
    <span class="coords">-75243.8544, 67522.4253, 0.0000</span>
    <div class="st-group">
      <svg class="st"><use href="#s-infer"/></svg><svg class="st"><use href="#s-snap"/></svg><span class="st-on"><svg class="st"><use href="#s-grid"/></svg></span><svg class="st"><use href="#s-ortho"/></svg><svg class="st"><use href="#s-polar"/></svg><span class="st-on"><svg class="st"><use href="#s-box"/></svg></span><span class="st-on"><svg class="st"><use href="#s-box3"/></svg></span><svg class="st"><use href="#s-angle"/></svg><span class="st-on"><svg class="st"><use href="#s-ucs"/></svg></span><svg class="st"><use href="#s-dyn"/></svg><svg class="st"><use href="#s-cross"/></svg><span class="st-on"><svg class="st"><use href="#s-trans"/></svg></span><svg class="st"><use href="#s-qp"/></svg><svg class="st"><use href="#s-sc"/></svg><svg class="st"><use href="#s-am"/></svg>
    </div>
    <div class="st-right">
      <span class="st-model">模型</span><svg class="st2"><use href="#s-model"/></svg><svg class="st2"><use href="#s-layout"/></svg>
    </div>
    <div class="st-end"><svg class="ic-d"><use href="#drop"/></svg><span class="st-clean"></span><span class="st-sizer"></span></div>
  </footer>

  <!-- 草图设置 -->
  <div class="dlg">
    <div class="dlg-title">
      <svg class="dlg-ic" viewBox="0 0 14 14"><rect width="14" height="14" fill="#d8d8d8"/><path d="M7 2L2 12h3l2-4 2 4h3z" fill="#c8201c"/></svg>
      <span class="dlg-name">草图设置</span>
      <span class="dlg-x">×</span>
    </div>
    <div class="dlg-client">
      <div class="dtabs">
        <span class="dtab t56">捕捉和栅格</span><span class="dtab t46">极轴追踪</span><span class="dtab t46">对象捕捉</span><span class="dtab t64">三维对象捕捉</span><span class="dtab dtab-on">动态输入</span><span class="dtab t45">快捷特性</span><span class="dtab t45">选择循环</span>
      </div>
      <div class="panel">
        <div class="two">
          <label class="chk"><i class="box">✓</i>启用指针输入<span class="hk"> (P)</span></label>
          <label class="chk chk-2"><i class="box">✓</i>可能时启用标注输入<span class="hk"> (D)</span></label>
        </div>
        <div class="two two-g">
          <div class="grp">
            <div class="legend">指针输入</div>
            <svg class="pv" viewBox="0 0 145 54">
              <rect width="145" height="54" fill="#000"/>
              <path d="M19 22h41M40 4v38" stroke="#a8a8a8"/><rect x="37" y="19" width="6" height="6" fill="none" stroke="#b8b8b8"/>
              <rect x="54" y="35" width="34" height="12" fill="#2c2c4c"/><rect x="91" y="35" width="35" height="12" fill="#2c2c4c"/>
              <text x="57" y="44" class="pv-t">15.1643</text><text x="94" y="44" class="pv-t">22.0669</text>
            </svg>
            <button class="btn btn-set">设置<span class="hk">(S)...</span></button>
          </div>
          <div class="grp">
            <div class="legend">标注输入</div>
            <svg class="pv" viewBox="0 0 145 54">
              <rect width="145" height="54" fill="#000"/>
              <path d="M0 47h41l75-16" fill="none" stroke="#b0141c" stroke-width="1.500"/>
              <path d="M41 47L34 23 108 6" fill="none" stroke="#8a8a8a" stroke-dasharray="1 2"/>
              <path d="M93 31h44M115 10v40" stroke="#b8b8b8"/>
              <circle cx="34" cy="23" r="1.600" fill="#fff"/><circle cx="108" cy="6" r="1.600" fill="#fff"/>
              <rect x="56" y="9" width="30" height="11" fill="#dcdcdc"/><rect x="58" y="11" width="26" height="7" fill="#555"/>
              <text x="59" y="18" class="pv-t pv-l">3.7721</text>
            </svg>
            <button class="btn btn-set">设置<span class="hk">(E)...</span></button>
          </div>
        </div>
        <div class="grp grp-w">
          <div class="legend">动态提示</div>
          <div class="grp-row">
            <svg class="pv pv-3" viewBox="0 0 145 54">
              <rect width="145" height="54" fill="#000"/>
              <path d="M4 22h41M25 3v38" stroke="#a8a8a8"/>
              <rect x="38" y="33" width="56" height="13" fill="#f0f0f8"/>
              <text x="39" y="43" class="pv-tip">指定第一点:</text>
            </svg>
            <div class="opts">
              <label class="chk chk-wrap"><i class="box">✓</i><span>在十字光标附近显示命令提示和命令<br>输入<span class="hk"> (C)</span></span></label>
              <label class="chk"><i class="box">✓</i>随命令提示显示更多提示<span class="hk"> (I)</span></label>
            </div>
          </div>
        </div>
        <div class="center-btn"><button class="btn btn-tool">绘图工具提示外观<span class="hk">(A)...</span></button></div>
      </div>
      <div class="dlg-foot">
        <button class="btn btn-foot">选项<span class="hk">(T)...</span></button>
        <span class="foot-gap"></span>
        <button class="btn btn-foot btn-def">确定</button>
        <button class="btn btn-foot">取消</button>
        <button class="btn btn-foot">帮助<span class="hk"> (H)</span></button>
      </div>
    </div>
  </div>

  <svg class="arrow" viewBox="0 0 1000 667" aria-hidden="true"><path d="M313 301L402 241 398 234 443 208 420 250 415 243 318 303z" fill="#ee3b30"/></svg>

  <div class="mark">
    <svg class="mark-logo" viewBox="0 0 40 40"><path d="M8 5V33" fill="none" stroke="#c7cbd6" stroke-width="3.500" stroke-linecap="round"/><path d="M13 4l21 13c3 2 3 5 0 7L15 37a5 5 0 0 1-7-3" fill="none" stroke="#c7cbd6" stroke-width="3.500" stroke-linecap="round"/><path d="M16 15l10 5.500-10 5.500z" fill="#c7cbd6"/><path d="M27 15v11" stroke="#c7cbd6" stroke-width="1.400"/></svg>
    <div class="mark-txt"><div class="mark-cn">溜溜自学</div><div class="mark-en">ZIXUE.3D66.COM</div></div>
  </div>
</div>
</body>
</html>
```

FILE: styles.css
```css
* { box-sizing: border-box; }
html, body { margin: 0; padding: 0; width: 1000px; height: 667px; overflow: hidden; background: #bcd3e6; }
.defs { position: absolute; }
body { font-family: "Noto Sans CJK SC", "Liberation Sans", sans-serif; font-size: 10px; color: #333; }
.window {
  position: relative; width: 1000px; height: 667px; padding: 7px 7px 7px 7px;
  display: flex; flex-direction: column; filter: blur(.35px);
  background: linear-gradient(#dce8f2, #b9d2e8 30px, #a8c6e2 90%, #d4e3f0);
}
svg { display: block; flex: none; }
.ic { width: 16px; height: 16px; }
.ic-d { width: 8px; height: 16px; color: #777; }
.ic-s { width: 14px; height: 14px; margin-right: 3px; }

/* head */
.head { display: grid; grid-template-columns: 33px 1fr; grid-template-rows: 20px 17px; position: relative; }
.app-btn {
  grid-row: 1 / 3; background: linear-gradient(#8a8a8a, #5f5f5f); border: 1px solid #4a4a4a;
  display: flex; align-items: center; padding-left: 3px; position: relative;
}
.app-logo { width: 21px; height: 26px; }
.ic-drop { width: 8px; height: 16px; color: #ddd; margin-left: 0; }
.row-title { display: flex; align-items: stretch; margin-right: 0; }
.qat {
  width: 360px; display: flex; align-items: center; background: linear-gradient(#8e8e8e, #6f6f6f);
  padding-left: 4px; gap: 4px; color: #ececec; border-top: 1px solid #aaa;
}
.qat .ic-d { color: #ddd; width: 7px; margin: 0 -1px; }
.ic-dim { opacity: .6; }
.ws-combo {
  width: 146px; height: 17px; display: flex; align-items: center; background: linear-gradient(#f6f6f6, #d8d8d8);
  color: #333; margin: 0 -2px 0 -1px; padding: 0 2px 0 2px; gap: 2px;
}
.ws-combo .ic { width: 14px; height: 14px; }
.ws-combo .ic-d { color: #333; }
.ws-text { flex: 1; font-size: 11px; line-height: 16px; color: #222; white-space: nowrap; }
.doc-title {
  width: 132px; padding-left: 14px; line-height: 15px; white-space: nowrap; color: #222; font-size: 10px; overflow: hidden;
  background: linear-gradient(90deg, #bcd6e2, #6fc0aa 35%, #3fa590 100%);
}
.search {
  width: 361px; background: linear-gradient(#808286, #6b6c70); display: flex; align-items: center;
  color: #eee; padding-left: 0;
}
.search-tab { width: 12px; color: #222; font-size: 9px; text-align: center; flex: none; }
.search-box {
  width: 145px; height: 16px; background: #f7f7f7; color: #777; font-style: italic; line-height: 15px;
  padding-left: 3px; flex: none; white-space: nowrap;
}
.ic-user { margin-left: 5px; }
.login { color: #e4e4e4; font-size: 10px; margin-left: 4px; white-space: nowrap; flex: none; }
.ic-login { margin-left: 48px; color: #333; }
.ic-x { margin-left: 5px; }
.search .ic-d { color: #444; width: 6px; }
.ic-help { margin-left: 13px; }
.win-ctl { margin: -7px 0 0 18px; display: flex; height: 17px; width: 82px; border: 1px solid #6b7a8a; border-top: 0; border-radius: 0 0 4px 4px; overflow: hidden; }
.wc { display: flex; align-items: center; justify-content: center; height: 16px; }
.wc-min, .wc-max { width: 22px; background: linear-gradient(#d7e0ea, #a9b8c7); border-right: 1px solid #6b7a8a; }
.wc-close { flex: 1; background: linear-gradient(#e88f7e, #c4392c 55%, #b8392c); color: #fff; font-size: 13px; font-weight: 700; line-height: 15px; }
.wc-min-bar { width: 10px; height: 3px; background: #fff; border: 1px solid #556; margin-top: 5px; }
.wc-max-box { width: 9px; height: 9px; background: #dfe6ee; border: 2px solid #556; }
.row-menu { display: flex; }
.menu {
  width: 915px; display: flex; gap: 20.400px; padding-left: 12px; align-items: center; color: #d8d8d8; white-space: nowrap; font-size: 10px;
  background: linear-gradient(#5f5f5f, #7b7b7b); line-height: 14px;
}
.menu span { width: 32px; }
.baidu { flex: 1; margin-right: -7px; display: flex; height: 17px; margin-top: 0; background: #d9ebfa; }
.baidu-ic { width: 23px; background: #2a8eef; display: flex; align-items: center; justify-content: center; }
.baidu-rest { color: #6aa8e8; padding-left: 6px; line-height: 16px; }
.cloud { width: 16px; height: 14px; }

/* toolbars */
.tb { height: 20px; display: flex; align-items: center; background: #ededed; color: #555; }
.tb1 { gap: 4px; margin-top: 0; border-bottom: 1px solid #444; }
.tb1 .ic { width: 15px; height: 15px; }
.tb2 { height: 20px; background: #e4e4e4; gap: 2px; }
.grip { width: 4px; height: 100%; background: #6a6a6a; flex: none; }
.grip-dark { width: 8px; margin: 0; background: repeating-linear-gradient(#6a6a6a 0 2px, #333 2px 3px); }
.tb1 .grip-dark { width: 6px; margin: 0 -1px 0 -2px; }
.sep { width: 1px; height: 15px; background: #aaa; flex: none; }
.sep-w { margin-right: 3px; }
.ic-faint { opacity: .35; }
.tb1 .ic-d { width: 7px; margin: 0 -2px; }
.tb1 .combo { margin-left: -3px; }
.combo { height: 18px; background: #f9f9f9; display: flex; align-items: center; color: #7a7a7a; font-size: 10px; flex: none; }
.combo .ic-d { margin: 0 0 0 auto; color: #aaa; }
.combo-mid { flex: 1; text-align: center; font-family: "Liberation Sans", sans-serif; font-size: 10px; letter-spacing: .4px; }
.combo-left { padding-left: 6px; font-size: 10px; font-family: "Liberation Sans", "Noto Sans CJK SC", sans-serif; letter-spacing: .3px; white-space: nowrap; }
.c-std1 { width: 96px; }
.c-std2 { flex: 1; }
.c-ws { width: 141px; margin-left: 7px; }
.tb2 .ic { width: 15px; height: 15px; color: #555; }
.ic-ml { margin-left: 3px; }
.c-layer { width: 243px; padding-left: 4px; }
.layer-name { color: #777; margin-left: 3px; font-size: 10px; font-family: "Liberation Sans", sans-serif; }
.c-color { width: 123px; padding-left: 3px; margin-left: 3px; }
.c-ltype { width: 130px; padding-left: 4px; }
.c-lw { width: 98px; padding-left: 4px; }
.c-plot { flex: 1; }
.mono { font-family: "Liberation Mono", monospace; font-size: 8.500px; color: #555; }
.mono-pl { padding-left: 8px; }
.ln { height: 1px; background: #333; flex: none; margin-right: 4px; }
.ln-l { width: 50px; }
.ln-m { width: 29px; }
.gap-sep { width: 2px; height: 18px; background: #c8c8c8; margin: 0 -1px; flex: none; }
.tb-gap { height: 6px; background: linear-gradient(#4e4e4e, #777 40%, #5c5c5c); }

/* main */
.main { height: 506px; display: flex; flex: none; }
.side { background: #6f6f6f; flex: none; }
.side-l { width: 24px; }
.side-r { width: 25px; padding: 3px 3px 0 4px; background: #707070; display: flex; flex-direction: column; gap: 8px; }
.vbar { background: #efefef; display: flex; flex-direction: column; align-items: center; }
.vbar-l { width: 19px; height: 361px; margin-top: 2px; gap: 2px; }
.vbar-r { height: 323px; gap: 1.800px; }
.vbar-o { height: 114px; gap: 2.300px; }
.vgrip { display: block; width: 100%; height: 5px; background: repeating-linear-gradient(#555 0 1px, #888 1px 2px); margin-bottom: 3px; }
.vi { width: 16px; height: 16px; color: #444; flex: none; }
.vi-a { font: 700 16px/16px "Liberation Sans", sans-serif; color: #333; text-align: center; }
.hsep { display: block; width: 15px; height: 1px; background: #aaa; margin: 3px 0 3px; flex: none; }
.center { flex: 1; display: flex; flex-direction: column; min-width: 0; }
.canvas-row { display: flex; height: 493px; flex: none; }
.canvas { width: 921px; height: 493px; }
.vscroll { flex: 1; background: #f2f2f2; display: flex; flex-direction: column; align-items: center; border-right: 1px solid #ccc; }
.vscroll .ic-d { color: #333; height: 12px; }
.vscroll .ic-d:first-child { transform: rotate(180deg); margin-top: 2px; }
.vscroll .ic-d:last-child { margin-top: 99px; }
.vthumb { display: block; width: 11px; height: 12px; margin-top: 352px; background: linear-gradient(90deg, #fafafa, #ddd); border: 1px solid #bbb; border-radius: 2px; }
.tabs-bar { height: 13px; background: #f3f3f3; display: flex; align-items: center; padding-left: 2px; flex: none; border-bottom: 1px solid #ccc; }
.nav-btns { display: flex; width: 44px; justify-content: space-between; color: #555; font-size: 7px; line-height: 12px; padding-right: 3px; }
.lt { position: relative; font-family: "Liberation Mono", "Noto Sans CJK SC", monospace; font-size: 8.500px; color: #333; padding: 0 6px 0 5px; line-height: 13px; flex: none; }
.lt::after { content: ""; position: absolute; right: 0; top: 0; width: 5px; height: 100%; background: linear-gradient(to top left, transparent 46%, #666 50%, transparent 54%); }
.lt-on { background: #202020; color: #f0f0f0; font-size: 10px; width: 35px; text-align: center; padding: 0; line-height: 13px; clip-path: polygon(8% 0, 100% 0, 92% 100%, 0 100%); margin-right: 2px; }
.lt-on::after { display: none; }
.hscroll-arrow { margin-left: 436px; font-size: 7px; color: #444; }
.hthumb { width: 12px; height: 11px; margin-left: 32px; background: linear-gradient(#fafafa, #ccc); border: 1px solid #aaa; border-radius: 2px; }

/* canvas text */
.view-label { font-size: 9px; fill: #dcdcdc; font-family: "Noto Sans CJK SC", sans-serif; }
.ucs-t { font-family: "Liberation Sans", sans-serif; font-size: 11px; fill: #c8ccd0; }
.cube-t { font-size: 13px; fill: #82878e; text-anchor: middle; font-family: "Noto Sans CJK SC", sans-serif; }
.cube-main { font-size: 17px; fill: #5e6268; text-anchor: middle; font-family: "Noto Sans CJK SC", sans-serif; }
.cube-w { font-size: 8px; fill: #3d434b; font-family: "Liberation Sans", sans-serif; text-anchor: middle; }

/* cmd */
.cmd { height: 46px; display: flex; margin-top: 0; border-top: 4px solid #777; flex: none; }
.cmd-side { width: 18px; background: #3c3c3c; display: flex; flex-direction: column; align-items: center; }
.cmd-grip { width: 16px; height: 3px; background: repeating-linear-gradient(90deg, #999 0 1px, #555 1px 2px); margin-top: 3px; }
.cmd-x { color: #e8e8e8; font-size: 11px; line-height: 14px; margin-top: 3px; font-family: "DejaVu Sans", sans-serif; }
.wrench { width: 14px; height: 14px; margin-top: 7px; }
.cmd-body { flex: 1; display: flex; flex-direction: column; }
.cmd-hist { height: 23px; background: #c4c4c4; color: #222; font-size: 11px; line-height: 28px; padding-left: 2px; border-bottom: 1px solid #888; }
.cmd-input { height: 19px; background: #fff; display: flex; align-items: center; padding-left: 5px; gap: 2px; }
.prompt { width: 12px; height: 12px; background: #dfe4ea; border: 1px solid #bbb; font: 7px/10px "Liberation Mono", monospace; color: #333; }
.cmd-input .ic-d { width: 6px; color: #999; }

/* status */
.status { height: 18px; background: linear-gradient(#7d7d7d, #8b8b8b); display: flex; align-items: center; padding-left: 9px; flex: none; border-top: 1px solid #555; }
.coords { width: 166px; font: 8.200px/16px "Liberation Mono", monospace; color: #2f2f2f; flex: none; white-space: nowrap; }
.st-group { display: flex; align-items: center; gap: 0; width: 500px; flex: none; }
.st { width: 18px; height: 16px; flex: none; margin-right: 0; }
.st-on { display: block; background: #c5dff0; height: 17px; margin: 0; padding-top: 1px; flex: none; box-shadow: inset 0 0 0 1px #e4f1fa; }
.st-right { display: flex; align-items: center; gap: 2px; margin-left: 16px; flex: none; }
.st-model { color: #1d1d1d; font-size: 10px; background: #a9a9a9; padding: 0 1px; line-height: 16px; margin-right: 1px; }
.st2 { width: 15px; height: 15px; background: #c8c8c8; flex: none; }
.st-end { margin-left: auto; display: flex; align-items: center; gap: 3px; padding-right: 2px; }
.st-end .ic-d { color: #111; }
.st-clean { width: 12px; height: 12px; background: #e6edf3; border: 2px solid #333; border-top-width: 3px; margin-right: 8px; }
.st-sizer { width: 10px; height: 12px; background: repeating-linear-gradient(135deg, #aaa 0 1px, transparent 1px 3px); }

/* dialog */
.dlg {
  position: absolute; left: 415px; top: 128px; width: 410px; height: 355px; border: 1px solid #3a3f45; border-radius: 5px;
  background: linear-gradient(90deg, #6d7a82, #3f4a52 30%, #8a9aa0 60%, #697680);
  padding: 0 4px 5px; display: flex; flex-direction: column; box-shadow: inset 0 0 0 1px #b0bcc4;
}
.dlg-title { height: 24px; display: flex; align-items: center; padding-left: 1px; gap: 6px; flex: none; color: #1a1a1a; }
.dlg-ic { width: 13px; height: 13px; }
.dlg-name { font-size: 10px; color: #111; line-height: 14px; }
.dlg-x {
  margin-left: auto; width: 38px; height: 15px; margin-top: -9px; margin-right: 1px; text-align: center; color: #fff; font-weight: 700; font-size: 12px; line-height: 13px;
  background: linear-gradient(#b57c72, #bd4a3c 50%, #a8443c); border-radius: 0 0 3px 3px; border: 1px solid #666;
}
.dlg-client { flex: 1; background: #f0f0f0; padding: 8px 12px 0 8px; display: flex; flex-direction: column; }
.dtabs { display: flex; gap: 2px; height: 17px; padding-left: 1px; align-items: flex-end; position: relative; z-index: 1; }
.dtab { height: 16px; background: linear-gradient(#f2f2f2, #dcdcdc); border: 1px solid #a9a9a9; border-bottom: 0; text-align: center; line-height: 14px; font-size: 9.500px; color: #222; white-space: nowrap; flex: none; }
.t56 { width: 56px; } .t46 { width: 46px; } .t64 { width: 63px; } .t45 { width: 44px; }
.dtab-on { width: 50px; height: 19px; background: #fff; margin: 0 -1px; border-color: #999; line-height: 15px; }
.panel { width: 380px; height: 260px; border: 1px solid #9aa0a6; background: #fff; padding: 13px 20px 0 13px; }
.two { display: grid; grid-template-columns: 168px 168px; column-gap: 10px; }
.two-g { margin-top: 10px; }
.chk { display: flex; align-items: center; font-size: 9.500px; line-height: 13px; color: #222; height: 13px; white-space: nowrap; }
.chk-2 { margin-left: 0; }
.box {
  width: 10px; height: 10px; flex: none; margin: 0 3px 0 1px; background: linear-gradient(#dfe9f2, #fff); border: 1px solid #8e9aa6;
  color: #274a8a; font: 700 9px/8px "DejaVu Sans", sans-serif; text-align: center;
}
.hk { font-family: "Liberation Mono", monospace; font-size: 8px; color: #333; }
.grp { border: 1px solid #e4e4e4; border-radius: 3px; height: 94px; padding: 0 11px; display: flex; flex-direction: column; align-items: center; }
.legend { align-self: flex-start; margin: -7px 0 0 -4px; padding: 0 2px; background: #fff; line-height: 12px; font-size: 9.500px; color: #222; }
.pv { width: 145px; height: 54px; margin-top: 4px; }
.pv-t { font: 6.500px "Liberation Mono", monospace; fill: #9a9ab8; }
.pv-l { fill: #e4e4e4; }
.pv-tip { font-size: 9.500px; fill: #2626a8; font-family: "Noto Sans CJK SC", sans-serif; font-weight: 500; }
.btn {
  display: block; border: 1px solid #8f8f8f; border-radius: 3px; background: linear-gradient(#f6f6f6, #dedede 50%, #cfcfcf);
  font: 9.500px/13px "Noto Sans CJK SC", sans-serif; color: #222; padding: 0; height: 15px; white-space: nowrap;
}
.btn-set { width: 92px; margin-top: 9px; }
.grp-w { width: 346px; height: 74px; margin-top: 10px; align-items: flex-start; }
.grp-row { display: flex; gap: 17px; align-items: flex-start; }
.pv-3 { margin-top: 4px; }
.opts { display: flex; flex-direction: column; gap: 11px; padding-top: 5px; width: 172px; }
.chk-wrap { height: 22px; align-items: flex-start; line-height: 11px; white-space: nowrap; font-family: "Liberation Sans", "Noto Sans CJK SC", sans-serif; }
.chk-wrap .box { margin-top: 0; }
.center-btn { display: flex; justify-content: center; padding-top: 13px; }
.btn-tool { width: 128px; }
.dlg-foot { display: flex; gap: 5px; margin-top: 15px; width: 380px; }
.btn-foot { width: 59px; height: 15px; }
.btn-def { border-color: #4a9ac8; box-shadow: 0 0 0 1px #bfe4f6 inset; }
.foot-gap { flex: 1; }

/* overlays */
.arrow { position: absolute; left: 0; top: 0; width: 1000px; height: 667px; pointer-events: none; }
.mark {
  position: absolute; left: 765px; top: 566px; width: 180px; height: 84px; background: #1f2f5e;
  display: flex; align-items: flex-start; padding: 20px 0 0 15px; gap: 10px;
}
.mark-logo { width: 36px; height: 38px; }
.mark-cn { font-size: 25px; line-height: 28px; color: #cfd3dd; font-weight: 500; letter-spacing: 2px; white-space: nowrap; }
.mark-en { font: 9px/12px "Liberation Sans", sans-serif; color: #aeb4c4; letter-spacing: 1.500px; margin-top: 2px; white-space: nowrap; }
```
